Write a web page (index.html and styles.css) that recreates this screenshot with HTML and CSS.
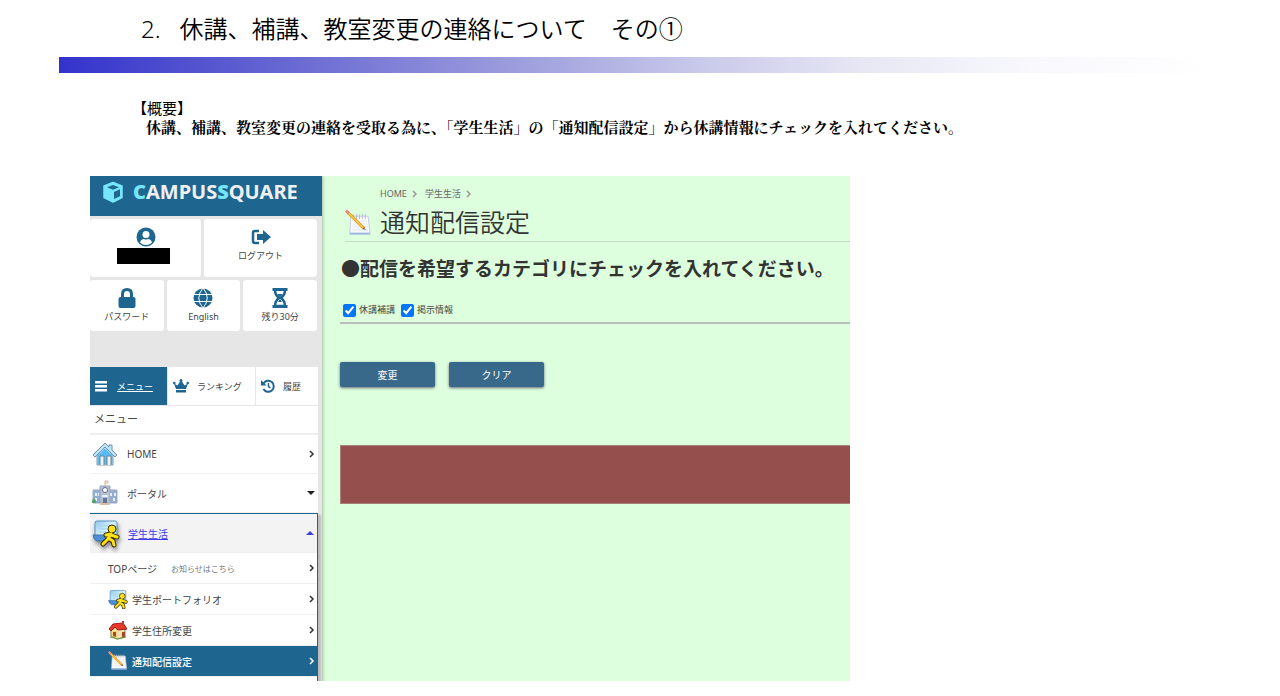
FILE: index.html
```html
<!DOCTYPE html>
<html lang="ja">
<head>
<meta charset="utf-8">
<title>休講、補講、教室変更の連絡について</title>
<link rel="stylesheet" href="styles.css">
</head>
<body>
<svg class="defs" aria-hidden="true">
  <defs>
    <linearGradient id="sky" x1="0" y1="0" x2="1" y2="1"><stop offset="0" stop-color="#8cc8f2"/><stop offset="0.5" stop-color="#d8f2ff"/><stop offset="1" stop-color="#8fd0f4"/></linearGradient>
    <symbol id="student" viewBox="0 0 28 28">
      <path d="M5 2h18q2 0 2 2v16H5Q3 20 3 16V4q0-2 2-2z" fill="url(#sky)" stroke="#5f93c4"/>
      <path d="M1 16h12l3 6H5q-4-2-4-6z" fill="#4c8fd6" stroke="#3b6ea8"/>
      <path d="M7 7h10M7 10h8M7 13h7" stroke="#9acdf0"/>
      <g stroke="#3a2d00" stroke-width="5" stroke-linecap="round" stroke-linejoin="round" fill="none"><path d="M19 15l-3 5-5 5M16 19l5 3 1 4M19 15l-5 1M19 16l6 2"/></g>
      <circle cx="20" cy="10" r="4" fill="#ffe11a" stroke="#3a2d00"/>
      <g stroke="#ffe11a" stroke-width="3" stroke-linecap="round" stroke-linejoin="round" fill="none"><path d="M19 15l-3 5-5 5M16 19l5 3 1 4M19 15l-5 1M19 16l6 2"/></g>
    </symbol>
    <symbol id="note" viewBox="0 0 28 28">
      <path d="M6 7h18l2 18H5z" fill="#fbfcff" stroke="#c3cbe0"/>
      <path d="M5 24h21v2H5z" fill="#9db6e0"/>
      <path d="M8 12h15M8 15h15M8 18h16M8 21h16" stroke="#dfe3ee"/>
      <path d="M9 5v5M12 5v5M15 5v5M18 5v5M21 5v5" stroke="#b5b8c4"/>
      <path d="M2 2l18 18" stroke="#c98a1c" stroke-width="3"/>
      <path d="M2 2l17 17" stroke="#ffc63a" stroke-width="2"/>
      <path d="M1 1l3 3" stroke="#e88a80" stroke-width="3"/>
      <path d="M19 19l2 2" stroke="#444" stroke-width="1"/>
    </symbol>
    <symbol id="next" viewBox="0 0 6 8"><path d="M1 1l3 3-3 3" fill="none" stroke="currentColor" stroke-width="1.500"/></symbol>
  </defs>
</svg>

<header class="slide-head">
  <h1 class="slide-title"><span>2.</span><span>休講、補講、教室変更の連絡について　その①</span></h1>
</header>
<div class="rule"></div>

<section class="summary">
  <h2 class="summary-label">【概要】</h2>
  <p class="summary-text">休講、補講、教室変更の連絡を受取る為に、「学生生活」の「通知配信設定」から休講情報にチェックを入れてください。</p>
</section>

<div class="app">
  <aside class="side">
    <div class="brand">
      <svg class="brand-icon" viewBox="0 0 22 22"><path d="M11 1.500l9 3.500v11.500L11 21l-9-4.500V5z" fill="#78e6fa" stroke="#78e6fa" stroke-width="1.500" stroke-linejoin="round"/><path d="M11 4l6 2.200-6 2.500-6-2.500z" fill="#1e6690"/><path d="M12 11l6-2.700v7L12 18z" fill="#1e6690"/></svg>
      <span class="brand-name"><b>C</b>AMPUS<b>S</b>QUARE</span>
    </div>

    <div class="tiles">
      <div class="tile-row two">
        <button class="tile" aria-label="ユーザー">
          <svg class="tile-icon" viewBox="0 0 20 20"><circle cx="10" cy="10" r="9.500"/><circle cx="10" cy="7.500" r="3.500" fill="#fff"/><path d="M4 15.500q1-3.500 4-3.500 2 1 4 0 3 0 4 3.500-2.500 2.500-6 2.500t-6-2.500z" fill="#fff"/></svg>
          <span class="mask"></span>
        </button>
        <button class="tile">
          <svg class="tile-icon" viewBox="0 0 20 20"><path d="M8 4H4Q2 4 2 6v8q0 2 2 2h4" fill="none" stroke="#1e6690" stroke-width="2.500"/><path d="M6 7h6V3l8 7-8 7v-4H6z"/></svg>
          <span>ログアウト</span>
        </button>
      </div>
      <div class="tile-row three">
        <button class="tile">
          <svg class="tile-icon" viewBox="0 0 20 20"><rect x="1.500" y="9" width="17" height="11" rx="2"/><path d="M5.500 10V6q0-4.500 4.500-4.500T14.500 6v4" fill="none" stroke="#1e6690" stroke-width="3"/></svg>
          <span>パスワード</span>
        </button>
        <button class="tile">
          <svg class="tile-icon" viewBox="0 0 20 20"><circle cx="10" cy="10" r="9.500"/><path d="M1 6.500h18M1 13.500h18M10 0Q1.500 10 10 20M10 0q8.500 10 0 20" fill="none" stroke="#fff"/></svg>
          <span>English</span>
        </button>
        <button class="tile">
          <svg class="tile-icon" viewBox="0 0 20 20"><path d="M2.500 0h15v3h-15zM2.500 17h15v3h-15z"/><path d="M5 2q0 5 4 8-4 3-4 8h10q0-5-4-8 4-3 4-8" fill="none" stroke="#1e6690" stroke-width="2.500"/><path d="M7 6h6l-3 3.500zM8 14l2-3 2 3z"/></svg>
          <span>残り30分</span>
        </button>
      </div>
    </div>

    <div class="tabs">
      <button class="tab on"><svg class="tab-icon bars" viewBox="0 0 12 12"><path d="M0 1h12v2.500H0zM0 5h12v2.500H0zM0 9h12v2.500H0z"/></svg><span>メニュー</span></button>
      <button class="tab"><svg class="tab-icon crown" viewBox="0 0 16 14"><path d="M3 10L1 4.500l3.500 2L8 1l3.500 5.500 3.500-2L13 10zM3 11h10v2.500H3z"/><circle cx="1.300" cy="4" r="1.300"/><circle cx="8" cy="1.500" r="1.500"/><circle cx="14.700" cy="4" r="1.300"/></svg><span>ランキング</span></button>
      <button class="tab"><svg class="tab-icon clock" viewBox="0 0 14 14"><path d="M2.500 4.500a5.500 5.500 0 1 1 0 5.500" fill="none" stroke="#1e6690" stroke-width="2"/><path d="M0 1v5.500h5.500z"/><path d="M7.500 4v3.500l2 1.500" fill="none" stroke="#1e6690" stroke-width="1.500"/></svg><span>履歴</span></button>
    </div>

    <nav class="menu">
      <h3 class="menu-head">メニュー</h3>
      <a class="item" href="#">
        <svg class="item-icon" viewBox="0 0 26 26"><path d="M5 13h16v11H5z" fill="#8fd6fb" stroke="#8a9db0"/><path d="M13 2L1 14l2 2L13 6l10 10 2-2-5-5V4h-3v2z" fill="#b9e6fc" stroke="#7792aa"/><path d="M6 14l7-7 7 7v9H6z" fill="#5bbcf5"/><path d="M8 24v-9h4v9M15 24v-9h4v9" fill="#eaf6fc" stroke="#71828f"/></svg>
        <span>HOME</span><svg class="next"><use href="#next"/></svg>
      </a>
      <a class="item" href="#">
        <svg class="item-icon" viewBox="0 0 26 26"><path d="M1 10h9v13H1zM16 10h9v13h-9z" fill="#93aed0" stroke="#9aabc8"/><path d="M8 6h10v17H8z" fill="#b4bfd4" stroke="#98a3ba"/><path d="M13 6V1h3v2h-3" fill="none" stroke="#d8b294"/><circle cx="13" cy="10" r="2.500" fill="#fff" stroke="#626d88"/><path d="M3 13h2v3H3zM6 13h1v3H6zM18 13h2v3h-2zM22 13h2v3h-2zM3 18h2v3H3zM21 18h2v3h-2zM10 15h6v2h-6z" fill="#e7f0ff"/><path d="M11 18h4v5h-4z" fill="#68748f"/><path d="M0 23q-1-2 2-5 3 3 2 5z" fill="#58a568"/><path d="M8 24h10" stroke="#d8c0a8" stroke-width="2"/></svg>
        <span>ポータル</span><svg class="caret" viewBox="0 0 8 4"><path d="M0 0h8L4 4z" fill="#222"/></svg>
      </a>
      <div class="group">
        <a class="item open" href="#">
          <svg class="item-icon big"><use href="#student"/></svg>
          <span>学生生活</span><svg class="caret" viewBox="0 0 8 4"><path d="M0 4h8L4 0z" fill="#3c3ce8"/></svg>
        </a>
        <a class="sub" href="#"><span>TOPページ</span><small>お知らせはこちら</small><svg class="next"><use href="#next"/></svg></a>
        <a class="sub" href="#"><svg class="sub-icon"><use href="#student"/></svg><span>学生ポートフォリオ</span><svg class="next"><use href="#next"/></svg></a>
        <a class="sub" href="#"><svg class="sub-icon" viewBox="0 0 20 20"><path d="M3 9h14v8l-8 2-6-3z" fill="#f4e2b0" stroke="#8d7648"/><path d="M1 9l4-5 10-1 4 6-9 1-3-3-4 4z" fill="#e8382a" stroke="#9c1c14"/><path d="M5 11l2-3 3 3v8l-6-3v-5z" fill="#f7d889"/><path d="M5 12h3v5l-3-1zM14 12h3v5l-3 1z" fill="#a84a28"/><path d="M14 1h2v4h-2z" fill="#b04630"/><path d="M2 17l8 2 8-2" fill="none" stroke="#62a044"/></svg><span>学生住所変更</span><svg class="next"><use href="#next"/></svg></a>
        <a class="sub current" href="#"><svg class="sub-icon"><use href="#note"/></svg><span>通知配信設定</span><svg class="next"><use href="#next"/></svg></a>
      </div>
    </nav>
  </aside>

  <main class="main">
    <div class="crumbs"><a href="#">HOME</a><svg class="sep"><use href="#next"/></svg><a href="#">学生生活</a><svg class="sep"><use href="#next"/></svg></div>
    <div class="page-head"><svg class="page-icon"><use href="#note"/></svg><h2 class="page-title">通知配信設定</h2></div>
    <form class="form">
      <h3 class="lead">●配信を希望するカテゴリにチェックを入れてください。</h3>
      <div class="checks">
        <label class="check"><input type="checkbox" checked>休講補講</label>
        <label class="check"><input type="checkbox" checked>掲示情報</label>
      </div>
      <div class="actions">
        <button class="btn" type="button">変更</button>
        <button class="btn" type="reset">クリア</button>
      </div>
    </form>
    <div class="banner"></div>
  </main>
</div>
</body>
</html>
```

FILE: styles.css
```css
* { box-sizing: border-box; }

body {
  margin: 0;
  background: #fff;
  color: #000;
  font-family: "Noto Sans", "Noto Sans CJK JP", sans-serif;
}

h1, h2, h3, p { margin: 0; font-weight: 400; }
a { color: inherit; text-decoration: none; }
button { border: 0; padding: 0; font: inherit; color: inherit; }
svg { flex: none; display: block; }
.defs { position: absolute; width: 0; height: 0; }

/* Slide heading */
.slide-title {
  display: flex;
  gap: 19px;
  padding-left: 141px;
  font-size: 24px;
  font-weight: 350;
  line-height: 57px;
}
.rule {
  height: 16px;
  margin: 0 64px 0 59px;
  background: linear-gradient(90deg, #3333cc 0%, #6666d2 19%, #9999dc 38%, #c8c8ea 55%, #e8e8f5 70%, #f8f8fd 84%, #fff 100%);
}
.summary { padding: 26px 0 38px 132px; }
.summary-label { font-size: 15px; line-height: 19px; }
.summary-text {
  padding-left: 14px;
  font-size: 15px;
  line-height: 20px;
  font-weight: 700;
  font-family: "Liberation Serif", "Noto Serif CJK JP", "Noto Sans CJK JP", serif;
}

/* Portal window */
.app {
  display: grid;
  grid-template-columns: 232px 1fr;
  height: 505px;
  margin: 0 430px 15px 90px;
  overflow: hidden;
  background: #ddffdd;
  color: #444;
}

.side {
  background: #e6e6e6;
  font-size: 9px;
  box-shadow: 1px 0 3px #a8bca8;
}
.brand {
  display: flex;
  align-items: center;
  gap: 9px;
  height: 40px;
  padding: 0 0 8px 12px;
  background: #1e6690;
}
.brand-icon { width: 22px; height: 22px; }
.brand-name { font-size: 20px; line-height: 24px; font-weight: 700; color: #f0f0f0; font-family: "Noto Sans", sans-serif; }
.brand-name b { color: #78e6fa; }

.tiles { display: grid; gap: 3px; padding: 3px 5px 0 0; }
.tile-row { display: grid; gap: 3px; }
.two { grid-template-columns: 111px 1fr; }
.three { grid-template-columns: 1fr 1fr 1fr; }
.tile {
  display: flex;
  flex-direction: column;
  align-items: center;
  padding: 8px 0 6px;
  border-radius: 3px;
  background: #fff;
  line-height: 17px;
}
.two .tile { padding-bottom: 13px; }
.tile-icon { width: 20px; height: 20px; fill: #1e6690; }
.mask { width: 53px; height: 16px; margin: 1px 4px 0 0; background: #000; }

.tabs {
  display: grid;
  grid-template-columns: 77px 87px 1fr;
  gap: 1px;
  margin: 36px 4px 1px 0;
}
.tab {
  display: flex;
  align-items: center;
  gap: 8px;
  height: 38px;
  padding-left: 5px;
  background: #fff;
}
.tab.on { gap: 10px; background: #1e6690; color: #fff; text-decoration: underline; }
.tab-icon { fill: #1e6690; }
.on .tab-icon { fill: #fff; }
.bars { width: 12px; height: 12px; }
.crown { width: 16px; height: 14px; }
.clock { width: 14px; height: 14px; }

.menu { margin-right: 4px; background: #fff; }
.menu-head {
  height: 29px;
  padding-left: 4px;
  border-bottom: 2px solid #eee;
  font-size: 11px;
  line-height: 26px;
}
.item {
  display: flex;
  align-items: center;
  gap: 9px;
  height: 39px;
  padding: 0 3px 0 2px;
  border-bottom: 1px solid #f0f0f0;
  font-size: 10px;
}
.item-icon { width: 26px; height: 26px; }
.item-icon.big { width: 28px; height: 32px; filter: drop-shadow(1px 3px 2px #888); }
.next { width: 6px; height: 8px; margin-left: auto; color: #333; }
.caret { width: 8px; height: 4px; margin-left: auto; }

.group {
  border: solid #1e6690;
  border-width: 1px 1px 0 0;
  box-shadow: 3px 2px 2px #bbb;
  padding-bottom: 20px;
}
.item.open { gap: 8px; background: #f3f3f3; color: #3c3ce8; text-decoration: underline; }
.sub {
  display: flex;
  align-items: center;
  gap: 4px;
  height: 31px;
  padding: 0 2px 0 18px;
  border-bottom: 1px solid #f0f0f0;
  font-size: 10px;
}
.sub small { margin-left: 10px; font-size: 8px; color: #777; }
.sub-icon { width: 20px; height: 20px; }
.sub.current { background: #1e6690; color: #fff; font-weight: 500; }
.sub.current .next { color: #fff; }

/* Settings page */
.main { padding: 10px 0 0 18px; }
.crumbs {
  display: flex;
  align-items: center;
  gap: 5px;
  padding-left: 40px;
  font-size: 9px;
  line-height: 16px;
  color: #666;
}
.crumbs a + .sep + a { padding-left: 2px; }
.sep { width: 6px; height: 8px; color: #999; }
.page-head {
  display: flex;
  align-items: center;
  gap: 8px;
  margin-left: 5px;
  padding: 4px 0 2px;
  border-bottom: 1px solid #c6dcc8;
}
.page-icon { width: 27px; height: 28px; }
.page-title { font-size: 25px; font-weight: 350; line-height: 33px; color: #333; }
.lead { padding: 12px 0 0 1px; font-size: 19px; font-weight: 700; line-height: 30px; color: #333; }
.checks {
  display: flex;
  gap: 6px;
  padding: 18px 0 4px 3px;
  border-bottom: 2px solid #b9bdb9;
}
.check { display: flex; align-items: center; gap: 3px; font-size: 9px; line-height: 16px; }
.check input { width: 13px; height: 13px; margin: 0; accent-color: #0075ff; }
.actions { display: flex; gap: 14px; padding-top: 38px; }
.btn {
  width: 95px;
  height: 25px;
  border-radius: 2px;
  background: #38688a;
  box-shadow: 0 1px 3px #667;
  color: #fff;
  font-size: 10px;
}
.banner {
  height: 59px;
  margin-top: 58px;
  border: 1px solid #a8817a;
  border-right: 0;
  background: #954f4c;
}
```
